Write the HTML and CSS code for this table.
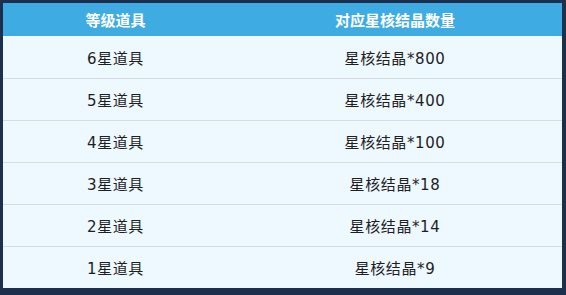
FILE: index.html
```html
<!DOCTYPE html>
<html lang="zh">
<head>
<meta charset="utf-8">
<link rel="stylesheet" href="styles.css">
</head>
<body>
<div class="frame">
  <table class="tbl">
    <thead>
      <tr><th class="c1">等级道具</th><th class="c2">对应星核结晶数量</th></tr>
    </thead>
    <tbody>
      <tr><td>6星道具</td><td>星核结晶*800</td></tr>
      <tr><td>5星道具</td><td>星核结晶*400</td></tr>
      <tr><td>4星道具</td><td>星核结晶*100</td></tr>
      <tr><td>3星道具</td><td>星核结晶*18</td></tr>
      <tr><td>2星道具</td><td>星核结晶*14</td></tr>
      <tr><td>1星道具</td><td>星核结晶*9</td></tr>
    </tbody>
  </table>
</div>
</body>
</html>
```

FILE: styles.css
```css
html, body {
  margin: 0;
  padding: 0;
  background: #1c2f4d;
}
.frame {
  padding: 3px 4px 6px 3px;
  width: 559px;
}
.tbl {
  width: 559px;
  border-collapse: collapse;
  table-layout: fixed;
  font-family: "DejaVu Sans", "Noto Sans CJK SC", sans-serif;
  font-size: 15px;
}
.tbl th {
  background: #3eace3;
  color: #fff;
  font-weight: bold;
  font-family: "Noto Sans CJK SC", sans-serif;
  height: 33px;
  padding: 0;
  text-align: center;
}
.c1 { width: 225px; }
.tbl td {
  background: #eef8ff;
  color: #1e1e1e;
  height: 41px;
  padding: 0;
  text-align: center;
  letter-spacing: 0.6px;
  border-top: 1px solid #d6dce3;
}
.tbl tbody tr:first-child td {
  border-top: none;
  height: 42px;
}
```
